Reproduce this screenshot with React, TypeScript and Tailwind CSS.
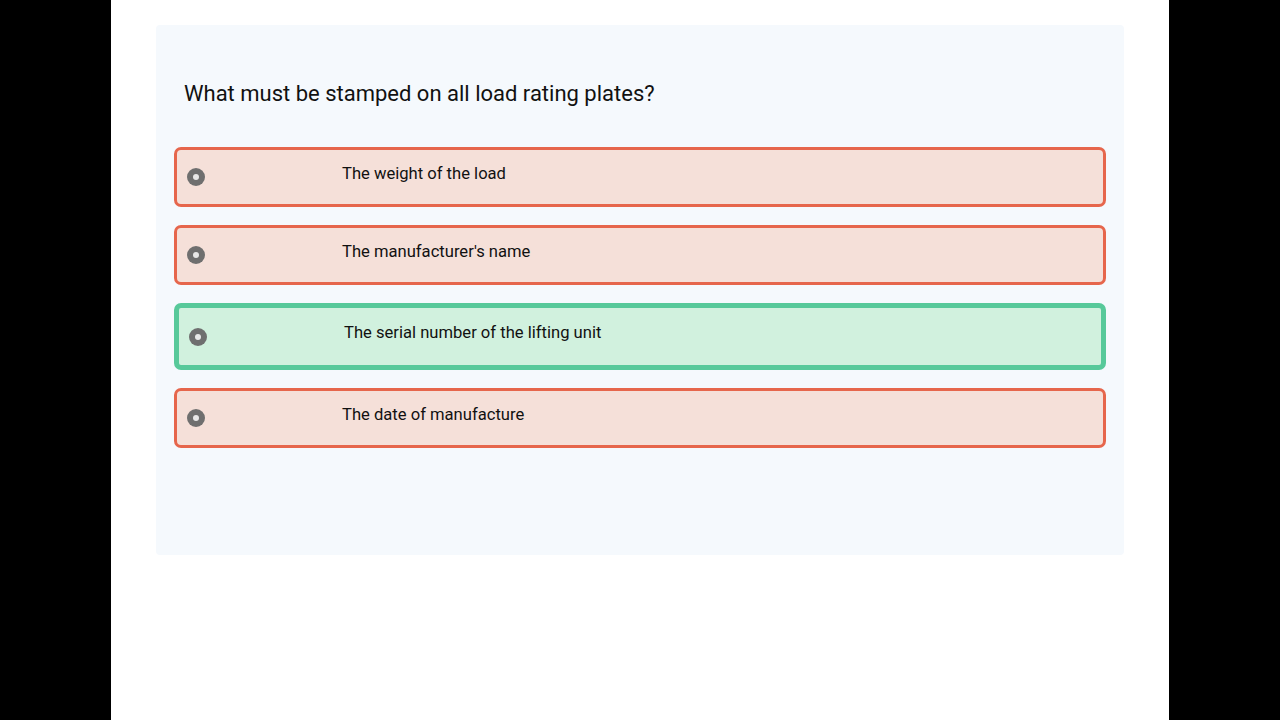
import { useState } from "react";

type Choice = { id: string; label: string };

const choices: Choice[] = [
  { id: "a", label: "The weight of the load" },
  { id: "b", label: "The manufacturer's name" },
  { id: "c", label: "The serial number of the lifting unit" },
  { id: "d", label: "The date of manufacture" },
];

const correctId = "c";

function RadioDot() {
  return (
    <span className="flex h-[18px] w-[18px] shrink-0 items-center justify-center rounded-full bg-[#6f6f6f]">
      <span className="h-[6px] w-[6px] rounded-full bg-[#e8e8e8]" />
    </span>
  );
}

function ChoiceRow({ choice, onPick }: { choice: Choice; onPick: () => void }) {
  const right = choice.id === correctId;
  return (
    <button
      onClick={onPick}
      className={`flex w-full items-center rounded-[7px] pl-[10px] text-left ${
        right
          ? "h-[67px] border-[5px] border-[#57c99a] bg-[#d1f1de]"
          : "h-[60px] border-[3px] border-[#e6664c] bg-[#f5e0d9]"
      }`}
    >
      <RadioDot />
      <span className="ml-[137px] -mt-[6px] text-[16.6px] text-[#111]">{choice.label}</span>
    </button>
  );
}

export default function App() {
  const [picked, setPicked] = useState<string | null>(null);

  return (
    <div className="flex h-[720px] w-[1280px] justify-center bg-black" style={{ fontFamily: "Roboto, 'Noto Sans', sans-serif" }}>
      <div className="w-[1058px] bg-white pt-[25px]">
        <div className="mx-[45px] h-[530px] rounded-[4px] bg-[#f5f9fd] px-[18px] pt-[54px]">
          <h2 className="ml-[10px] text-[22px] leading-[30px] text-[#111]">
            What must be stamped on all load rating plates?
          </h2>
          <div className="mt-[38px] flex flex-col gap-[18px]" data-picked={picked ?? ""}>
            {choices.map((c) => (
              <ChoiceRow key={c.id} choice={c} onPick={() => setPicked(c.id)} />
            ))}
          </div>
        </div>
      </div>
    </div>
  );
}
